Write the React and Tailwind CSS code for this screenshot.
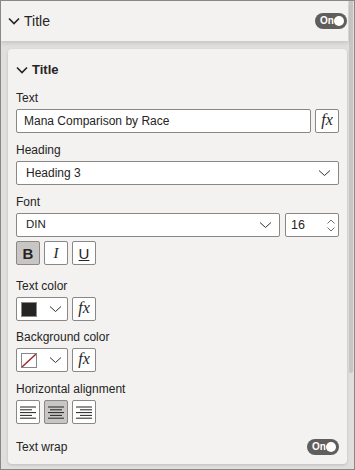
import React from "react";

const font = { fontFamily: '"Liberation Sans", Arial, sans-serif' };

function Chevron({ className = "" }) {
  return (
    <svg width="12" height="8" viewBox="0 0 12 8" className={className}>
      <path d="M1 1.5 L6 6.5 L11 1.5" fill="none" stroke="#252423" strokeWidth="1.6" />
    </svg>
  );
}

function DropChevron() {
  return (
    <svg width="13" height="8" viewBox="0 0 13 8">
      <path d="M1 1.5 L6.5 6.5 L12 1.5" fill="none" stroke="#323130" strokeWidth="1" />
    </svg>
  );
}

function Toggle() {
  return (
    <div className="w-[32px] h-[16px] rounded-full bg-[#605e5c] flex items-center justify-between pl-[5px] pr-[3px]">
      <span className="text-[10px] leading-none font-bold text-white">On</span>
      <span className="w-[10px] h-[10px] rounded-full bg-white" />
    </div>
  );
}

function Label({ children, className = "" }) {
  return (
    <div className={`h-[16px] leading-[16px] text-[12px] text-[#252423] mb-[3px] ${className}`}>
      {children}
    </div>
  );
}

function Fx() {
  return (
    <div className="w-[24px] h-[24px] border border-[#8a8886] rounded-[2px] bg-white flex items-center justify-center shrink-0">
      <span
        className="italic text-[16px] leading-none text-[#252423] -mt-[2px]"
        style={{ fontFamily: '"Liberation Serif", "Times New Roman", serif' }}
      >
        fx
      </span>
    </div>
  );
}

function AlignIcon({ kind }) {
  const lines = [16, 12, 16, 12, 16];
  return (
    <svg width="18" height="16" viewBox="0 0 18 16">
      {lines.map((w, i) => {
        const y = 3 + i * 2.8;
        let x1 = 1;
        if (kind === "center") x1 = 1 + (16 - w) / 2;
        if (kind === "right") x1 = 17 - w;
        return <line key={i} x1={x1} x2={x1 + w} y1={y} y2={y} stroke="#252423" strokeWidth="1" />;
      })}
    </svg>
  );
}

function SqButton({ selected, children }) {
  return (
    <div
      className={`w-[24px] h-[24px] border border-[#8a8886] rounded-[2px] flex items-center justify-center ${
        selected ? "bg-[#c8c6c4]" : "bg-white"
      }`}
    >
      {children}
    </div>
  );
}

function ColorPicker({ none }) {
  return (
    <div className="flex gap-[4px]">
      <div className="w-[52px] h-[24px] border border-[#8a8886] rounded-[2px] bg-white flex items-center pl-[4px] pr-[5px] justify-between">
        <div className="w-[16px] h-[15px] border border-[#8a8886] bg-[#252423] relative overflow-hidden">
          {none && (
            <svg width="14" height="13" viewBox="0 0 14 13" className="absolute inset-0 bg-white">
              <line x1="0" y1="13" x2="14" y2="0" stroke="#a4262c" strokeWidth="1.4" />
            </svg>
          )}
        </div>
        <DropChevron />
      </div>
      <Fx />
    </div>
  );
}

export default function App() {
  return (
    <div
      className="w-[355px] h-[470px] border border-[#8a8886] bg-[#e1dfdd] flex overflow-hidden text-[#252423]"
      style={font}
    >
      <div className="flex-1 flex flex-col">
        {/* Section header */}
        <div className="h-[40px] shrink-0 bg-[#f3f2f1] flex items-center pl-[7px] pr-[1px] shadow-[0_2px_4px_rgba(0,0,0,0.12)] relative z-10">
          <Chevron />
          <span className="ml-[4px] text-[14px]">Title</span>
          <div className="ml-auto">
            <Toggle />
          </div>
        </div>

        {/* Card */}
        <div className="pt-[8px] pl-[7px] pr-[1px]">
          <div className="bg-[#f3f2f1] rounded-[4px] shadow-[0_1px_3px_rgba(0,0,0,0.15)] px-[8px] pb-[8px]">
            <div className="h-[42px] flex items-center">
              <Chevron />
              <span className="ml-[4px] text-[13px] font-bold">Title</span>
            </div>

            <Label className="mt-[-1px]">Text</Label>
            <div className="flex gap-[4px]">
              <div className="flex-1 h-[24px] border border-[#8a8886] rounded-[2px] bg-white flex items-center pl-[7px] text-[12px]">
                Mana Comparison by Race
              </div>
              <Fx />
            </div>

            <Label className="mt-[9px]">Heading</Label>
            <div className="h-[24px] border border-[#8a8886] rounded-[2px] bg-white flex items-center pl-[9px] pr-[7px] justify-between text-[12px]">
              <span>Heading 3</span>
              <DropChevron />
            </div>

            <Label className="mt-[9px]">Font</Label>
            <div className="flex gap-[5px]">
              <div className="flex-1 h-[24px] border border-[#8a8886] rounded-[2px] bg-white flex items-center pl-[9px] pr-[7px] justify-between text-[11.5px]">
                <span>DIN</span>
                <DropChevron />
              </div>
              <div className="w-[54px] h-[24px] border border-[#8a8886] rounded-[2px] bg-white flex items-center pl-[5px] pr-[3px] justify-between text-[12.5px]">
                <span>16</span>
                <div className="flex flex-col gap-[3px]">
                  <svg width="8" height="5" viewBox="0 0 8 5">
                    <path d="M0.5 4.5 L4 1 L7.5 4.5" fill="none" stroke="#605e5c" strokeWidth="0.9" />
                  </svg>
                  <svg width="8" height="5" viewBox="0 0 8 5">
                    <path d="M0.5 0.5 L4 4 L7.5 0.5" fill="none" stroke="#605e5c" strokeWidth="0.9" />
                  </svg>
                </div>
              </div>
            </div>
            <div className="flex gap-[4px] mt-[4px]">
              <SqButton selected>
                <span className="font-bold text-[15px] leading-none">B</span>
              </SqButton>
              <SqButton>
                <span
                  className="italic text-[15px] leading-none"
                  style={{ fontFamily: '"Liberation Serif", serif' }}
                >
                  I
                </span>
              </SqButton>
              <SqButton>
                <span className="underline text-[15px] leading-none">U</span>
              </SqButton>
            </div>

            <Label className="mt-[13px]">Text color</Label>
            <ColorPicker />

            <Label className="mt-[8px]">Background color</Label>
            <ColorPicker none />

            <Label className="mt-[9px]">Horizontal alignment</Label>
            <div className="flex gap-[4px]">
              <SqButton>
                <AlignIcon kind="left" />
              </SqButton>
              <SqButton selected>
                <AlignIcon kind="center" />
              </SqButton>
              <SqButton>
                <AlignIcon kind="right" />
              </SqButton>
            </div>

            <div className="flex items-center justify-between mt-[14px]">
              <span className="text-[12px]">Text wrap</span>
              <Toggle />
            </div>
          </div>
        </div>
      </div>

      {/* Scrollbar */}
      <div className="w-[6px] shrink-0 flex justify-center">
        <div className="w-[4px] h-[372px] rounded-b-full bg-[#c8c6c4]" />
      </div>
    </div>
  );
}
